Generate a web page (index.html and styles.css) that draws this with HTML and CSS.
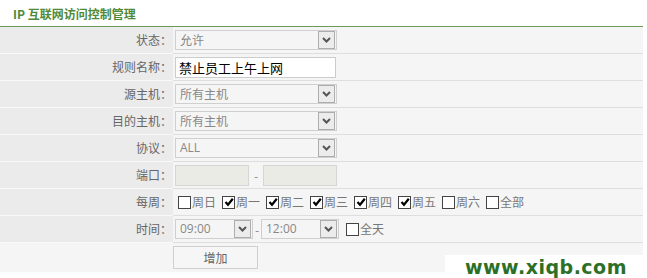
FILE: index.html
```html
<!DOCTYPE html>
<html lang="zh-CN">
<head>
    <meta charset="UTF-8">
    <title>IP 互联网访问控制管理</title>
    <link rel="stylesheet" href="styles.css">
</head>
<body>
    <div class="panel">
        <h2 class="title">IP 互联网访问控制管理</h2>
        <div class="form">
            <div class="row">
                <div class="label">状态：</div>
                <div class="value">
                    <span class="select wide"><span class="sel-text">允许</span><span class="arrow"><svg width="9" height="6" viewBox="0 0 9 6"><path d="M1 1 L4.5 4.5 L8 1" fill="none" stroke="#555" stroke-width="2"/></svg></span></span>
                </div>
            </div>
            <div class="row">
                <div class="label">规则名称：</div>
                <div class="value">
                    <span class="text-input">禁止员工上午上网</span>
                </div>
            </div>
            <div class="row">
                <div class="label">源主机：</div>
                <div class="value">
                    <span class="select wide"><span class="sel-text">所有主机</span><span class="arrow"><svg width="9" height="6" viewBox="0 0 9 6"><path d="M1 1 L4.5 4.5 L8 1" fill="none" stroke="#555" stroke-width="2"/></svg></span></span>
                </div>
            </div>
            <div class="row">
                <div class="label">目的主机：</div>
                <div class="value">
                    <span class="select wide"><span class="sel-text">所有主机</span><span class="arrow"><svg width="9" height="6" viewBox="0 0 9 6"><path d="M1 1 L4.5 4.5 L8 1" fill="none" stroke="#555" stroke-width="2"/></svg></span></span>
                </div>
            </div>
            <div class="row">
                <div class="label">协议：</div>
                <div class="value">
                    <span class="select wide"><span class="sel-text latin">ALL</span><span class="arrow"><svg width="9" height="6" viewBox="0 0 9 6"><path d="M1 1 L4.5 4.5 L8 1" fill="none" stroke="#555" stroke-width="2"/></svg></span></span>
                </div>
            </div>
            <div class="row">
                <div class="label">端口：</div>
                <div class="value">
                    <span class="port"></span>
                    <span class="dash">-</span>
                    <span class="port"></span>
                </div>
            </div>
            <div class="row">
                <div class="label">每周：</div>
                <div class="value days">
                    <span class="check"><span class="box"></span>周日</span>
                    <span class="check"><span class="box"><svg width="10" height="10" viewBox="0 0 10 10"><path d="M1.5 5 L4 7.8 L8.8 1.8" fill="none" stroke="#000" stroke-width="2.2"/></svg></span>周一</span>
                    <span class="check"><span class="box"><svg width="10" height="10" viewBox="0 0 10 10"><path d="M1.5 5 L4 7.8 L8.8 1.8" fill="none" stroke="#000" stroke-width="2.2"/></svg></span>周二</span>
                    <span class="check"><span class="box"><svg width="10" height="10" viewBox="0 0 10 10"><path d="M1.5 5 L4 7.8 L8.8 1.8" fill="none" stroke="#000" stroke-width="2.2"/></svg></span>周三</span>
                    <span class="check"><span class="box"><svg width="10" height="10" viewBox="0 0 10 10"><path d="M1.5 5 L4 7.8 L8.8 1.8" fill="none" stroke="#000" stroke-width="2.2"/></svg></span>周四</span>
                    <span class="check"><span class="box"><svg width="10" height="10" viewBox="0 0 10 10"><path d="M1.5 5 L4 7.8 L8.8 1.8" fill="none" stroke="#000" stroke-width="2.2"/></svg></span>周五</span>
                    <span class="check"><span class="box"></span>周六</span>
                    <span class="check"><span class="box"></span>全部</span>
                </div>
            </div>
            <div class="row">
                <div class="label">时间：</div>
                <div class="value">
                    <span class="select narrow"><span class="sel-text latin">09:00</span><span class="arrow"><svg width="9" height="6" viewBox="0 0 9 6"><path d="M1 1 L4.5 4.5 L8 1" fill="none" stroke="#555" stroke-width="2"/></svg></span></span>
                    <span class="dash tight">-</span>
                    <span class="select narrow"><span class="sel-text latin">12:00</span><span class="arrow"><svg width="9" height="6" viewBox="0 0 9 6"><path d="M1 1 L4.5 4.5 L8 1" fill="none" stroke="#555" stroke-width="2"/></svg></span></span>
                    <span class="check allday"><span class="box"></span>全天</span>
                </div>
            </div>
            <div class="button-row">
                <button type="button">增加</button>
            </div>
        </div>
    </div>
    <div class="watermark">www.xiqb.com</div>
</body>
</html>
```

FILE: styles.css
```css
body {
    margin: 0;
    padding: 0;
    background-color: #fff;
    font-family: "Noto Sans CJK SC", "Noto Sans", sans-serif;
    font-size: 12px;
    color: #666;
}

.panel {
    width: 643px;
}

.title {
    margin: 0;
    height: 26px;
    line-height: 27px;
    padding-left: 13px;
    font-size: 12px;
    font-weight: bold;
    color: #4f8a3a;
    border-bottom: 1px solid #6d9a57;
}

.form {
    background-color: #f5f5f5;
}

.row {
    display: flex;
    height: 27px;
}

.label {
    width: 172px;
    padding-right: 1px;
    background-color: #ebebeb;
    border-bottom: 1px solid #f9f9f9;
    text-align: right;
    line-height: 26px;
    white-space: nowrap;
    text-spacing-trim: space-all;
}

.value {
    flex: 1;
    display: flex;
    align-items: center;
    padding-left: 2px;
    border-bottom: 1px solid #dedede;
}

.select {
    display: flex;
    align-items: center;
    height: 18px;
    border: 1px solid #cfcfcf;
    background-color: #f5f5f5;
    box-sizing: content-box;
}

.select.wide {
    width: 160px;
}

.select.narrow {
    width: 76px;
}

.sel-text {
    flex: 1;
    padding-left: 4px;
    color: #888;
    font-size: 12px;
    line-height: 18px;
}

.latin {
    font-family: "Open Sans", "Noto Sans", sans-serif;
    font-size: 12px;
}

.arrow {
    width: 15px;
    height: 16px;
    margin-right: 1px;
    border: 1px solid #adadad;
    background-color: #ececec;
    display: flex;
    align-items: center;
    justify-content: center;
}

.text-input {
    display: block;
    width: 156px;
    height: 19px;
    padding-left: 3px;
    border: 1px solid #cccccc;
    background-color: #fff;
    color: #000;
    font-size: 13px;
    line-height: 19px;
}

.port {
    display: block;
    width: 72px;
    height: 19px;
    border: 1px solid #d6d6d6;
    background-color: #ebebe6;
}

.dash {
    width: 14px;
    text-align: center;
    color: #888;
}

.dash.tight {
    width: 8px;
}

.days {
    padding-left: 5px;
    gap: 6px;
}

.check {
    display: flex;
    align-items: center;
    color: #777;
    line-height: 14px;
}

.box {
    width: 11px;
    height: 11px;
    margin-right: 1px;
    border: 1px solid #444;
    background-color: #fff;
    display: flex;
    align-items: center;
    justify-content: center;
}

.allday {
    margin-left: 7px;
}

.button-row {
    height: 29px;
    padding-left: 173px;
    padding-top: 3px;
    box-sizing: border-box;
}

button {
    width: 85px;
    height: 23px;
    padding: 0;
    border: 1px solid #cfcfcf;
    background-color: #f6f6f6;
    color: #666;
    font-family: "Noto Sans CJK SC", "Noto Sans", sans-serif;
    font-size: 12px;
    cursor: pointer;
}

.watermark {
    position: absolute;
    left: 445px;
    top: 255px;
    width: 202px;
    height: 23px;
    background-color: #fff;
    color: #2c7027;
    font-family: "DejaVu Sans", sans-serif;
    font-weight: bold;
    font-size: 19px;
    line-height: 24px;
    padding-left: 20px;
    box-sizing: border-box;
    letter-spacing: 0.5px;
}
```
